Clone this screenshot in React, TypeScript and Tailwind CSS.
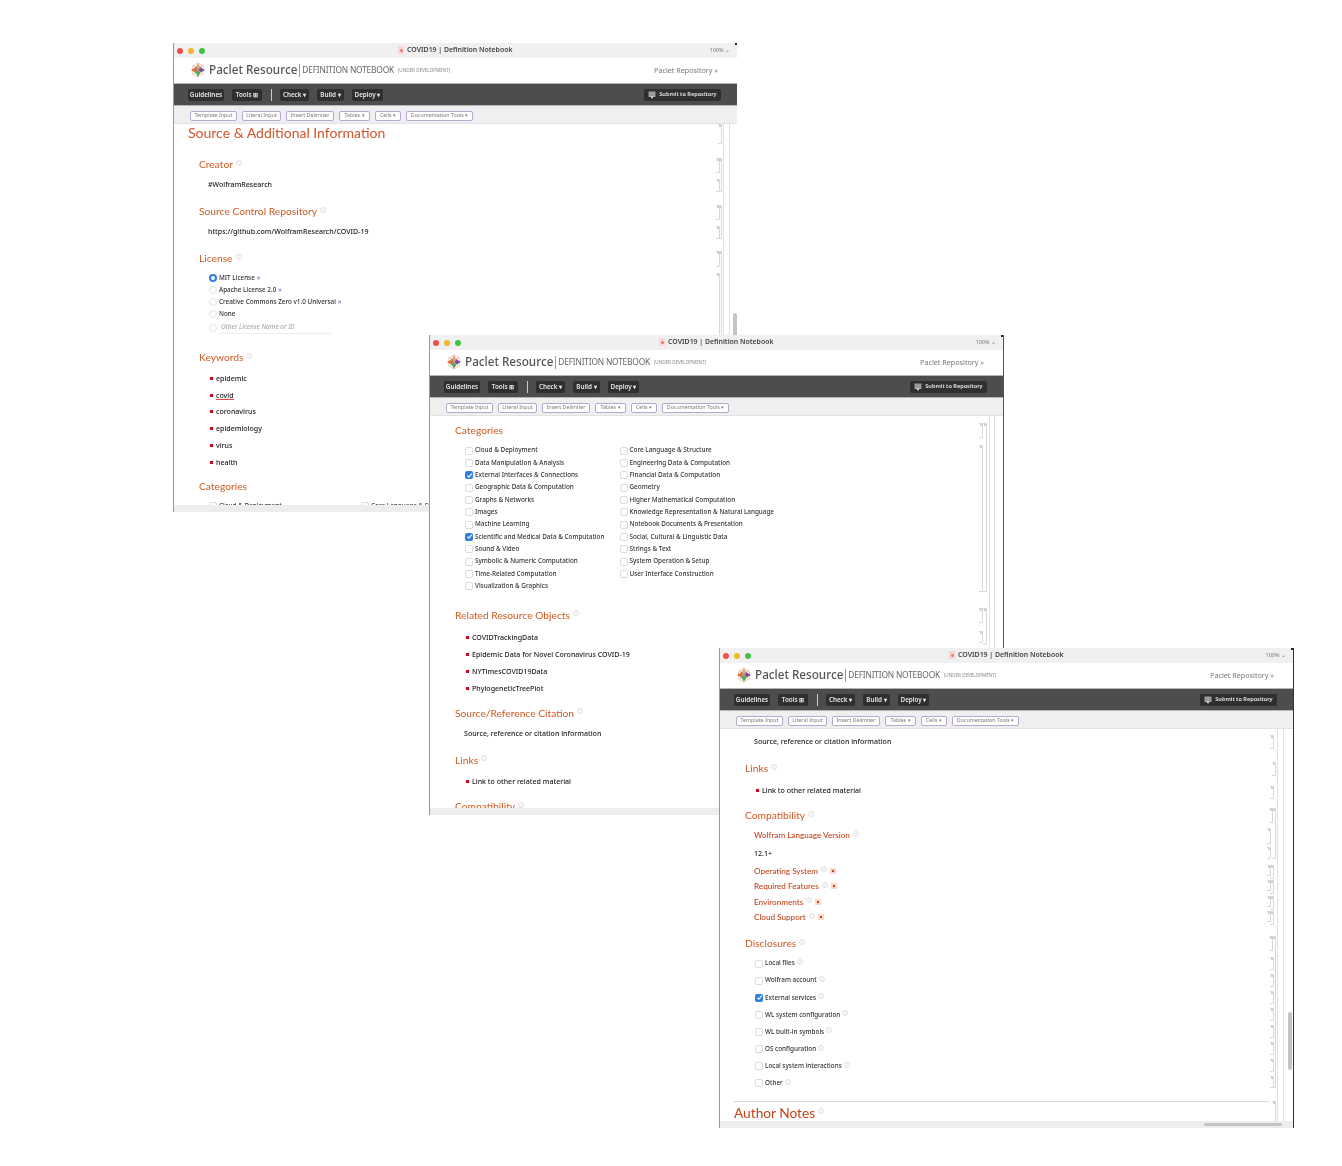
import type { ReactNode } from "react";

type Seg = [number, number, number];

const toolbarBtn = "h-[10px] flex items-center justify-center bg-white border border-[#b8a8cf] rounded-[2px] text-[5.3px] text-[#7a7a7a] whitespace-nowrap";
const darkBtn = "h-[12px] flex items-center justify-center bg-[#2f2f2f] rounded-[2px] text-[6.3px] font-semibold text-[#e8e8e8] whitespace-nowrap";
const h1 = "flex items-center gap-[3px] h-[20px] pb-[2px] font-['Lato',sans-serif] text-[10.25px] leading-none text-[#cc5a22] whitespace-nowrap";
const h2 = "flex items-center gap-[3px] pb-[2px] font-['Lato',sans-serif] text-[8.15px] font-medium leading-none text-[#c4431a] whitespace-nowrap";
const body = "text-[7.05px] font-medium leading-none text-[#222] whitespace-nowrap";
const small = "text-[6.35px] font-medium leading-none text-[#333] whitespace-nowrap";

function Info() {
  return (
    <svg width="6" height="6" viewBox="0 0 6 6" className="shrink-0 -mt-[3px]">
      <circle cx="3" cy="3" r="2.5" fill="none" stroke="#ccc" strokeWidth="0.6" />
      <path d="M3 2.5V4.5M3 1.3V1.9" stroke="#ccc" strokeWidth="0.6" />
    </svg>
  );
}

function Logo() {
  return (
    <svg width="16" height="16" viewBox="0 0 16 16" className="shrink-0">
      <path d="M8 1 13.5 4.2V11.8L8 15 2.5 11.8V4.2Z" fill="none" stroke="#eec4a4" strokeWidth="0.8" />
      <path d="M8 1 10.4 5.4 8 8 5.6 5.4Z" fill="#e8a06a" />
      <path d="M15 8 10.6 10.4 8 8 10.6 5.6Z" fill="#7a4fa0" />
      <path d="M8 15 5.6 10.6 8 8 10.4 10.6Z" fill="#5aa55a" />
      <path d="M1 8 5.4 5.6 8 8 5.4 10.4Z" fill="#d9703c" />
      <path d="M3 3 5.6 5 8 8 5 5.6Z" fill="#4a78b8" />
      <path d="M13 13 10.4 11 8 8 11 10.4Z" fill="#d8b64a" />
      <path d="M13 3 11 5.6 8 8 10.4 5Z" fill="#c8507a" />
      <path d="M3 13 5 10.4 8 8 5.6 11Z" fill="#4ea5a0" />
    </svg>
  );
}

function Box({ checked = false }: { checked?: boolean }) {
  if (checked) {
    return (
      <span className="w-[8px] h-[8px] rounded-[2px] bg-[#2f7fe0] flex items-center justify-center shrink-0">
        <svg width="7" height="7" viewBox="0 0 7 7">
          <path d="M1.3 3.6 2.9 5.2 5.8 1.6" fill="none" stroke="#fff" strokeWidth="1.1" />
        </svg>
      </span>
    );
  }
  return <span className="w-[8px] h-[8px] rounded-[2px] bg-white border border-[#dcdcdc] shrink-0" />;
}

function Radio({ on = false }: { on?: boolean }) {
  return on ? (
    <span className="w-[8px] h-[8px] rounded-full border-[2.5px] border-[#2f7fe0] bg-white shrink-0" />
  ) : (
    <span className="w-[8px] h-[8px] rounded-full border border-[#e2e2e2] bg-white shrink-0" />
  );
}

function Bullet({ children, underline = false, h = "h-[17px]" }: { children: ReactNode; underline?: boolean; h?: string }) {
  return (
    <div className={`flex items-center gap-[3px] ${h} ${body}`}>
      <span className="w-[3px] h-[3px] bg-[#d4001a] shrink-0" />
      <span className={underline ? "border-b border-[#e04848] leading-[8px]" : ""}>{children}</span>
    </div>
  );
}

function Brackets({ segs, left, width }: { segs: Seg[]; left: number; width: number }) {
  return (
    <svg
      className="absolute top-0 h-[1000px] pointer-events-none"
      style={{ left, width }}
      viewBox={`0 0 ${width} 1000`}
      preserveAspectRatio="xMinYMin slice"
    >
      {segs.map(([x, y1, y2], i) => (
        <g key={i}>
          <path d={`M${x - 3} ${y1}.5H${x}.5V${y2}.5H${x - 3}`} fill="none" stroke="#d8d8d8" strokeWidth="1" />
          <rect x={x - 2} y={y1 + 1} width="2" height="2" fill="#cfcfcf" />
        </g>
      ))}
    </svg>
  );
}

function Chrome() {
  return (
    <>
      <div className="relative flex items-center h-[15px] bg-[#f0f0f0] shrink-0">
        <div className="flex items-center gap-[5px] pl-[3px]">
          <span className="w-[6px] h-[6px] rounded-full bg-[#ee4f4a]" />
          <span className="w-[6px] h-[6px] rounded-full bg-[#f5b52e]" />
          <span className="w-[6px] h-[6px] rounded-full bg-[#3ec345]" />
        </div>
        <div className="flex-1 flex items-center justify-center gap-[3px] -ml-[4px]">
          <span className="w-[6px] h-[8px] bg-[#f9d6d6] flex items-center justify-center">
            <span className="w-[3px] h-[3px] rounded-full bg-[#ee7777]" />
          </span>
          <span className="text-[6.9px] font-semibold text-[#444] whitespace-nowrap">COVID19 | Definition Notebook</span>
        </div>
        <span className="pr-[7px] text-[5.5px] text-[#777] whitespace-nowrap">100% ⌄</span>
      </div>
      <div className="flex items-center h-[25px] bg-white pl-[16px] pr-[19px] pb-px shrink-0">
        <Logo />
        <span className="ml-[3px] text-[11.7px] font-medium text-[#555] whitespace-nowrap">Paclet Resource</span>
        <span className="ml-[2px] h-[13px] border-l border-[#999]" />
        <span className="ml-[2px] text-[8.4px] tracking-[-0.2px] text-[#666] whitespace-nowrap">DEFINITION NOTEBOOK</span>
        <span className="ml-[4px] text-[4.6px] text-[#888] whitespace-nowrap">(UNDER DEVELOPMENT)</span>
        <span className="ml-auto text-[7.2px] text-[#777] whitespace-nowrap">Paclet Repository »</span>
      </div>
      <div className="flex items-center h-[23px] bg-[#4d4d4d] border-y border-[#b5b5b5] pl-[14px] pr-[16px] shrink-0">
        <span className={`${darkBtn} w-[36px]`}>Guidelines</span>
        <span className={`${darkBtn} w-[30px] ml-[8px]`}>Tools ⊞</span>
        <span className="ml-[9px] h-[12px] border-l border-[#ccc]" />
        <span className={`${darkBtn} w-[29px] ml-[8px]`}>Check ▾</span>
        <span className={`${darkBtn} w-[27px] ml-[8px]`}>Build ▾</span>
        <span className={`${darkBtn} w-[31px] ml-[8px]`}>Deploy ▾</span>
        <span className={`${darkBtn} w-[77px] ml-auto gap-[3px]`}>
          <svg width="8" height="8" viewBox="0 0 8 8">
            <rect x="0.5" y="0.5" width="7" height="5.5" fill="#9a9a9a" />
            <path d="M2.5 5.5H5.5L4 7.8Z" fill="#fff" />
          </svg>
          <span className="text-[5.6px]">Submit to Repository</span>
        </span>
      </div>
      <div className="flex items-center h-[18px] bg-[#efefef] border-b border-[#e2e2e2] pl-[16px] pt-[2px] gap-[5px] shrink-0">
        <span className={`${toolbarBtn} w-[47px]`}>Template Input</span>
        <span className={`${toolbarBtn} w-[39px]`}>Literal Input</span>
        <span className={`${toolbarBtn} w-[48px]`}>Insert Delimiter</span>
        <span className={`${toolbarBtn} w-[31px]`}>Tables ▾</span>
        <span className={`${toolbarBtn} w-[26px]`}>Cells ▾</span>
        <span className={`${toolbarBtn} w-[67px]`}>Documentation Tools ▾</span>
      </div>
    </>
  );
}

function WindowOne() {
  const license = ["MIT License", "Apache License 2.0", "Creative Commons Zero v1.0 Universal", "None"];
  const keywords = ["epidemic", "covid", "coronavirus", "epidemiology", "virus", "health"];
  return (
    <div className="absolute left-[173px] top-[43px] w-[564px] h-[469px] flex flex-col bg-white border-l border-[#999] overflow-hidden blur-[0.7px] font-['Noto_Sans',sans-serif]">
      <Chrome />
      <div className="relative flex-1 overflow-hidden pl-[25px]">
        <div className="-ml-[11px] flex items-center h-[17px] font-['Lato',sans-serif] text-[14px] leading-none text-[#d2552a] whitespace-nowrap">Source &amp; Additional Information</div>
        <div className={`${h1} mt-[14px]`}>Creator <Info /></div>
        <div className={`${body} h-[20px] flex items-center ml-[9px]`}>#WolframResearch</div>
        <div className={`${h1} mt-[7px]`}>Source Control Repository <Info /></div>
        <div className={`${body} h-[20px] flex items-center ml-[9px]`}>https://github.com/WolframResearch/COVID-19</div>
        <div className={`${h1} mt-[7px]`}>License <Info /></div>
        <div className="mt-[3px] ml-[10px] flex flex-col">
          {license.map((l, i) => (
            <div key={l} className={`flex items-center gap-[2px] h-[12px] ${small}`}>
              <Radio on={i === 0} />
              <span>{l}</span>
              {i < 3 && <span className="text-[#5a5ad0]">»</span>}
            </div>
          ))}
          <div className={`flex items-center gap-[2px] h-[14px] mt-[1px] ${small}`}>
            <Radio />
            <span className="w-[113px] h-[12px] flex items-center pl-[2px] border-b border-[#eee] italic text-[#aaa]">Other License Name or ID</span>
          </div>
        </div>
        <div className={`${h1} mt-[13px]`}>Keywords <Info /></div>
        <div className="mt-[2px] ml-[11px] flex flex-col">
          {keywords.map((k) => (
            <Bullet key={k} underline={k === "covid"} h="h-[16.8px]">{k}</Bullet>
          ))}
        </div>
        <div className={`${h1} mt-[6px]`}>Categories</div>
        <div className={`mt-[3px] ml-[10px] flex items-center gap-[2px] h-[12px] ${small}`}>
          <Box /><span className="w-[140px]">Cloud &amp; Deployment</span><Box /><span>Core Language &amp; Structure</span>
        </div>
        <Brackets
          left={535}
          width={29}
          segs={[[12, 0, 19], [10, 34, 48], [12, 34, 67], [10, 55, 67], [10, 81, 95], [12, 81, 114], [10, 102, 114], [10, 127, 142], [12, 127, 212], [10, 149, 212]]}
        />
        <span className="absolute left-[549px] top-0 bottom-0 border-l border-[#e2e2e2]" />
        <span className="absolute left-[555px] top-0 bottom-0 border-l border-[#e2e2e2]" />
        <span className="absolute left-[559px] top-[189px] w-[4px] h-[24px] rounded-full bg-[#c4c4c4]" />
      </div>
      <div className="h-[7px] bg-[#ededed] shrink-0" />
      <span className="absolute right-0 top-0 w-[2px] h-[2px] bg-[#222]" />
    </div>
  );
}

const catLeft = [
  "Cloud & Deployment", "Data Manipulation & Analysis", "External Interfaces & Connections", "Geographic Data & Computation",
  "Graphs & Networks", "Images", "Machine Learning", "Scientific and Medical Data & Computation", "Sound & Video",
  "Symbolic & Numeric Computation", "Time-Related Computation", "Visualization & Graphics",
];
const catRight = [
  "Core Language & Structure", "Engineering Data & Computation", "Financial Data & Computation", "Geometry",
  "Higher Mathematical Computation", "Knowledge Representation & Natural Language", "Notebook Documents & Presentation",
  "Social, Cultural & Linguistic Data", "Strings & Text", "System Operation & Setup", "User Interface Construction",
];

function WindowTwo() {
  return (
    <div className="absolute left-[429px] top-[335px] w-[575px] h-[480px] flex flex-col bg-white border-l border-[#999] border-r border-r-[#555] overflow-hidden blur-[0.35px] font-['Noto_Sans',sans-serif]">
      <Chrome />
      <div className="relative flex-1 overflow-hidden pl-[25px]">
        <div className={`${h1} mt-[5px]`}>Categories</div>
        <div className="mt-[3.5px] ml-[10px] flex">
          <div className="w-[154.5px] flex flex-col">
            {catLeft.map((c) => (
              <div key={c} className={`flex items-center gap-[2px] h-[12.33px] ${small}`}>
                <Box checked={c.startsWith("External") || c.startsWith("Scientific")} />
                <span>{c}</span>
              </div>
            ))}
          </div>
          <div className="flex flex-col">
            {catRight.map((c) => (
              <div key={c} className={`flex items-center gap-[2px] h-[12.33px] ${small}`}>
                <Box />
                <span>{c}</span>
              </div>
            ))}
          </div>
        </div>
        <div className={`${h1} mt-[13.5px]`}>Related Resource Objects <Info /></div>
        <div className="mt-[3px] ml-[11px] flex flex-col">
          {["COVIDTrackingData", "Epidemic Data for Novel Coronavirus COVID-19", "NYTimesCOVID19Data", "PhylogeneticTreePlot"].map((k) => (
            <Bullet key={k}>{k}</Bullet>
          ))}
        </div>
        <div className={`${h1} mt-[7px]`}>Source/Reference Citation <Info /></div>
        <div className={`${body} h-[20px] flex items-center ml-[9px]`}>Source, reference or citation information</div>
        <div className={`${h1} mt-[7px]`}>Links <Info /></div>
        <div className="mt-[2px] ml-[11px]"><Bullet>Link to other related material</Bullet></div>
        <div className={`${h1} mt-[7.5px]`}>Compatibility <Info /></div>
        <Brackets
          left={545}
          width={30}
          segs={[[7, 7, 21], [11, 7, 175], [7, 29, 175], [7, 192, 206], [11, 192, 228], [7, 215, 226], [7, 239, 254], [11, 239, 285], [7, 262, 285], [7, 291, 310], [11, 291, 392]]}
        />
        <span className="absolute left-[559px] top-0 bottom-0 border-l border-[#e2e2e2]" />
        <span className="absolute left-[564px] top-0 bottom-0 border-l border-[#e2e2e2]" />
      </div>
      <div className="h-[7px] bg-[#ededed] shrink-0" />
      <span className="absolute right-0 top-0 w-[2px] h-[2px] bg-[#222]" />
    </div>
  );
}

function Toggle() {
  return (
    <span className="w-[6px] h-[6px] bg-[#f6d8cf] flex items-center justify-center shrink-0">
      <span className="w-[2px] h-[2px] bg-[#c4431a]" />
    </span>
  );
}

const disclosures = [
  "Local files", "Wolfram account", "External services", "WL system configuration", "WL built-in symbols",
  "OS configuration", "Local system interactions", "Other",
];

function WindowThree() {
  return (
    <div className="absolute left-[719px] top-[648px] w-[575px] h-[480px] flex flex-col bg-white border-l border-[#999] border-r border-r-[#333] overflow-hidden blur-[0.35px] font-['Noto_Sans',sans-serif]">
      <Chrome />
      <div className="relative flex-1 overflow-hidden pl-[25px]">
        <div className={`${body} h-[20px] flex items-center ml-[9px] mt-[3px]`}>Source, reference or citation information</div>
        <div className={`${h1} mt-[7.5px]`}>Links <Info /></div>
        <div className="mt-[2.5px] ml-[11px]"><Bullet>Link to other related material</Bullet></div>
        <div className={`${h1} mt-[7px]`}>Compatibility <Info /></div>
        <div className={`${h2} h-[20px] ml-[9px]`}>Wolfram Language Version <Info /></div>
        <div className={`${body} h-[16px] flex items-center ml-[9px]`}>12.1+</div>
        <div className="mt-[2px] ml-[9px] flex flex-col">
          {["Operating System", "Required Features", "Environments", "Cloud Support"].map((s) => (
            <div key={s} className={`${h2} h-[15.5px]`}>{s} <Info /><Toggle /></div>
          ))}
        </div>
        <div className={`${h1} mt-[8px]`}>Disclosures <Info /></div>
        <div className="ml-[10px] mt-[1px] flex flex-col">
          {disclosures.map((d) => (
            <div key={d} className={`flex items-center gap-[2px] h-[17.1px] ${small}`}>
              <Box checked={d === "External services"} />
              <span>{d}</span>
              <Info />
            </div>
          ))}
        </div>
        <div className="-ml-[11px] mr-[24px] mt-[9px] border-t border-[#d8d8d8]" />
        <div className="-ml-[11px] flex items-center gap-[3px] h-[20px] mt-[1px] font-['Lato',sans-serif] text-[13.7px] leading-none text-[#c4431a] whitespace-nowrap">Author Notes <Info /></div>
        <Brackets
          left={545}
          width={30}
          segs={[[8, 6, 19], [10, 33, 46], [8, 57, 69], [7, 79, 93], [10, 79, 129], [5, 99, 114], [5, 118, 129], [5, 136, 146], [8, 136, 149], [5, 151, 161], [8, 151, 164], [5, 167, 177], [8, 167, 180], [5, 182, 192], [8, 182, 195], [7, 207, 221], [10, 207, 358], [8, 228, 240], [8, 245, 257], [8, 262, 274], [8, 279, 291], [8, 296, 308], [8, 313, 325], [8, 330, 342], [8, 347, 358], [10, 372, 392]]}
        />
        <span className="absolute left-[557px] top-0 bottom-0 border-l border-[#e2e2e2]" />
        <span className="absolute left-[563px] top-0 bottom-0 border-l border-[#e2e2e2]" />
        <span className="absolute left-[568px] top-[283px] w-[4px] h-[58px] rounded-full bg-[#c4c4c4]" />
      </div>
      <div className="relative h-[7px] bg-[#ededed] shrink-0">
        <span className="absolute left-[484px] top-[2px] w-[78px] h-[3px] rounded-full bg-[#c4c4c4]" />
      </div>
      <span className="absolute right-0 top-0 w-[2px] h-[2px] bg-[#222]" />
    </div>
  );
}

export default function App() {
  return (
    <div className="relative w-[1342px] h-[1166px] bg-white overflow-hidden">
      <WindowOne />
      <WindowTwo />
      <WindowThree />
    </div>
  );
}
